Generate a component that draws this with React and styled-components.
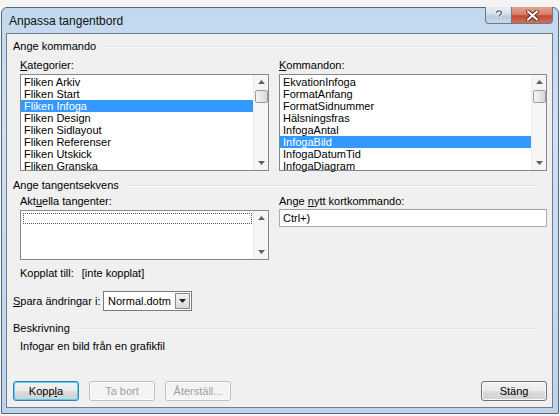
import React from "react";
import styled, { createGlobalStyle } from "styled-components";

const Global = createGlobalStyle`
  html, body { margin: 0; padding: 0; background: #f4f4f4; }
  body { width: 560px; height: 416px; overflow: hidden; font-family: "Liberation Sans", Arial, sans-serif; font-size: 11px; color: #000; }
  * { box-sizing: border-box; }
`;

const Window = styled.div`
  margin: 7px 0 0 1px;
  width: 558px;
  height: 407px;
  border: 1px solid #5b6775;
  border-radius: 6px 6px 0 0;
  background: linear-gradient(180deg, #c2d8ee 0%, #cfe1f3 30%, #bcd3ea 100%);
  display: flex;
  flex-direction: column;
  padding: 0 5px 5px 4px;
`;

const TitleBar = styled.div`
  height: 25px;
  display: flex;
  align-items: flex-start;
  justify-content: space-between;
  padding-left: 3px;
`;

const Title = styled.div`
  font-size: 12px;
  line-height: 12px;
  margin-top: 7px;
  color: #111;
`;

const Caption = styled.div`
  display: flex;
  margin-top: -1px;
`;

const CapBtn = styled.div`
  height: 17px;
  width: ${(p) => p.w}px;
  display: flex;
  align-items: center;
  justify-content: center;
  border: 1px solid #6b7a8c;
  border-top: none;
  background: ${(p) =>
    p.close
      ? "linear-gradient(180deg, #e6a394 0%, #d7826c 45%, #c14a2f 55%, #d0715a 100%)"
      : "linear-gradient(180deg, #e8eef5 0%, #d4dfec 45%, #bccbdc 55%, #cad7e6 100%)"};
  border-radius: ${(p) => (p.close ? "0 0 4px 0" : "0 0 0 4px")};
  border-left: ${(p) => (p.close ? "none" : "1px solid #6b7a8c")};
`;

const Client = styled.div`
  flex: 1;
  border: 1px solid #6f7d8d;
  background: #f0f0f0;
  display: flex;
  flex-direction: column;
  padding: 5px 5px 6px 6px;
`;

const GroupHead = styled.div`
  display: flex;
  align-items: center;
  height: 13px;
  margin-right: 11px;
  margin-top: ${(p) => p.mt || 0}px;
`;

const GroupTitle = styled.span`
  line-height: 13px;
  padding-right: 6px;
`;

const GroupLine = styled.div`
  flex: 1;
  height: 2px;
  border-top: 1px solid #dce2e7;
  border-bottom: 1px solid #fbfbfb;
  margin-top: 1px;
`;

const Columns = styled.div`
  display: grid;
  grid-template-columns: 249px 268px;
  column-gap: 10px;
  padding-left: 7px;
  margin-top: ${(p) => p.mt || 0}px;
`;

const Field = styled.div`
  display: flex;
  flex-direction: column;
`;

const Label = styled.div`
  line-height: 13px;
  height: 13px;
  white-space: nowrap;
  margin-bottom: ${(p) => p.mb ?? 2}px;
  u { text-decoration: underline; text-underline-offset: 1px; }
`;

const ListBox = styled.div`
  height: ${(p) => p.h}px;
  border: 1px solid #828790;
  background: #fff;
  display: flex;
`;

const Items = styled.div`
  flex: 1;
  padding-top: 1px;
  display: flex;
  flex-direction: column;
`;

const Item = styled.div`
  height: 12px;
  line-height: 12px;
  padding-left: 3px;
  white-space: nowrap;
  background: ${(p) => (p.sel ? "#3399ff" : "transparent")};
  color: ${(p) => (p.sel ? "#fff" : "#000")};
`;

const FocusRow = styled.div`
  margin: 1px 1px 0 2px;
  height: 11px;
  border: 1px dotted #555;
`;

const ScrollBar = styled.div`
  width: 15px;
  background: #f5f5f5;
  border-left: 1px solid #ececec;
  display: flex;
  flex-direction: column;
  align-items: center;
`;

const Arrow = styled.div`
  height: 14px;
  width: 100%;
  display: flex;
  align-items: center;
  justify-content: center;
  svg { display: block; }
`;

const Track = styled.div`
  flex: 1;
  width: 100%;
  display: flex;
  justify-content: center;
`;

const Thumb = styled.div`
  width: 13px;
  height: 13px;
  margin-top: 1px;
  border: 1px solid #9c9c9c;
  border-radius: 2px;
  background: linear-gradient(90deg, #f3f3f3 0%, #e8e8e8 50%, #d6d6d6 100%);
`;

const TextInput = styled.div`
  height: 18px;
  border: 1px solid #abadb3;
  border-top-color: #a0a0a0;
  background: #fff;
  line-height: 16px;
  padding-left: 3px;
`;

const InfoRow = styled.div`
  display: flex;
  gap: 8px;
  padding-left: 7px;
  margin-top: 7px;
  line-height: 13px;
`;

const SaveRow = styled.div`
  display: flex;
  align-items: center;
  margin-top: 11px;
  u { text-decoration: underline; text-underline-offset: 1px; }
`;

const SaveLabel = styled.span`
  width: 90px;
  white-space: nowrap;
`;

const Select = styled.div`
  width: 89px;
  height: 20px;
  border: 1px solid #7a7a7a;
  background: #fff;
  display: flex;
`;

const SelectText = styled.div`
  flex: 1;
  line-height: 18px;
  padding-left: 4px;
`;

const SelectBtn = styled.div`
  width: 15px;
  margin: 1px;
  border: 1px solid #8a8a8a;
  background: linear-gradient(180deg, #f2f2f2 0%, #e6e6e6 50%, #d8d8d8 100%);
  display: flex;
  align-items: center;
  justify-content: center;
`;

const Desc = styled.div`
  padding-left: 7px;
  margin-top: 5px;
  line-height: 13px;
`;

const ButtonRow = styled.div`
  margin-top: auto;
  display: flex;
  gap: 10px;
  align-items: center;
`;

const Button = styled.div`
  width: 66px;
  height: 20px;
  border-radius: 3px;
  border: 1px solid ${(p) => (p.disabled ? "#bfbfbf" : p.focus ? "#3c7fb1" : "#707070")};
  background: ${(p) =>
    p.disabled
      ? "#f4f4f4"
      : "linear-gradient(180deg, #f2f2f2 0%, #ebebeb 50%, #dddddd 51%, #cfcfcf 100%)"};
  box-shadow: ${(p) => (p.focus ? "inset 0 0 0 1px #48d8fb" : "inset 0 0 0 1px #fcfcfc")};
  color: ${(p) => (p.disabled ? "#a0a0a0" : "#000")};
  display: flex;
  align-items: center;
  justify-content: center;
  line-height: 13px;
  margin-left: ${(p) => (p.push ? "auto" : "0")};
  u { text-decoration: underline; text-underline-offset: 1px; }
`;

const ScrollUp = () => (
  <svg width="7" height="4" viewBox="0 0 7 4"><path d="M3.5 0 L7 4 L0 4 Z" fill="#606060" /></svg>
);
const ScrollDown = ({ color = "#606060" }) => (
  <svg width="7" height="4" viewBox="0 0 7 4"><path d="M0 0 L7 0 L3.5 4 Z" fill={color} /></svg>
);

const Scroll = ({ thumb }) => (
  <ScrollBar>
    <Arrow><ScrollUp /></Arrow>
    <Track>{thumb && <Thumb />}</Track>
    <Arrow><ScrollDown /></Arrow>
  </ScrollBar>
);

const categories = [
  "Fliken Arkiv",
  "Fliken Start",
  "Fliken Infoga",
  "Fliken Design",
  "Fliken Sidlayout",
  "Fliken Referenser",
  "Fliken Utskick",
  "Fliken Granska",
];
const commands = [
  "EkvationInfoga",
  "FormatAnfang",
  "FormatSidnummer",
  "Hälsningsfras",
  "InfogaAntal",
  "InfogaBild",
  "InfogaDatumTid",
  "InfogaDiagram",
];

export default function App() {
  return (
    <>
      <Global />
      <Window>
        <TitleBar>
          <Title>Anpassa tangentbord</Title>
          <Caption>
            <CapBtn w={27}>
              <svg width="10" height="12" viewBox="0 0 10 12">
                <path d="M2.5 3.8 C2.5 1.2 7.5 1.2 7.5 3.8 C7.5 5.6 5 5.6 5 7.6" fill="none" stroke="#fff" strokeWidth="3" />
                <path d="M2.5 3.8 C2.5 1.2 7.5 1.2 7.5 3.8 C7.5 5.6 5 5.6 5 7.6" fill="none" stroke="#4a5566" strokeWidth="1.3" />
                <rect x="3.6" y="8.6" width="2.8" height="2.8" fill="#fff" />
                <rect x="4.3" y="9.3" width="1.4" height="1.4" fill="#4a5566" />
              </svg>
            </CapBtn>
            <CapBtn w={41} close>
              <svg width="13" height="11" viewBox="0 0 13 11">
                <path d="M2 1.5 L11 9.5 M11 1.5 L2 9.5" stroke="#5a2a22" strokeWidth="4" strokeLinecap="round" />
                <path d="M2 1.5 L11 9.5 M11 1.5 L2 9.5" stroke="#fff" strokeWidth="2.2" strokeLinecap="round" />
              </svg>
            </CapBtn>
          </Caption>
        </TitleBar>
        <Client>
          <GroupHead mt={1}>
            <GroupTitle>Ange kommando</GroupTitle>
            <GroupLine />
          </GroupHead>
          <Columns mt={6}>
            <Field>
              <Label><u>K</u>ategorier:</Label>
              <ListBox h={97}>
                <Items>
                  {categories.map((c, i) => (
                    <Item key={c} sel={i === 2}>{c}</Item>
                  ))}
                </Items>
                <Scroll thumb />
              </ListBox>
            </Field>
            <Field>
              <Label><u>K</u>ommandon:</Label>
              <ListBox h={97}>
                <Items>
                  {commands.map((c, i) => (
                    <Item key={c} sel={i === 5}>{c}</Item>
                  ))}
                </Items>
                <Scroll thumb />
              </ListBox>
            </Field>
          </Columns>
          <GroupHead mt={8}>
            <GroupTitle>Ange tangentsekvens</GroupTitle>
            <GroupLine />
          </GroupHead>
          <Columns mt={3}>
            <Field>
              <Label>Akt<u>u</u>ella tangenter:</Label>
              <ListBox h={50}>
                <Items><FocusRow /></Items>
                <Scroll />
              </ListBox>
            </Field>
            <Field>
              <Label mb={1}>Ange <u>n</u>ytt kortkommando:</Label>
              <TextInput>Ctrl+)</TextInput>
            </Field>
          </Columns>
          <InfoRow>
            <span>Kopplat till:</span>
            <span>[inte kopplat]</span>
          </InfoRow>
          <SaveRow>
            <SaveLabel><u>S</u>para ändringar i:</SaveLabel>
            <Select>
              <SelectText>Normal.dotm</SelectText>
              <SelectBtn><ScrollDown color="#222" /></SelectBtn>
            </Select>
          </SaveRow>
          <GroupHead mt={11}>
            <GroupTitle>Beskrivning</GroupTitle>
            <GroupLine />
          </GroupHead>
          <Desc>Infogar en bild från en grafikfil</Desc>
          <ButtonRow>
            <Button focus>Kopp<u>l</u>a</Button>
            <Button disabled>Ta bort</Button>
            <Button disabled>Återställ...</Button>
            <Button push>Stäng</Button>
          </ButtonRow>
        </Client>
      </Window>
    </>
  );
}
